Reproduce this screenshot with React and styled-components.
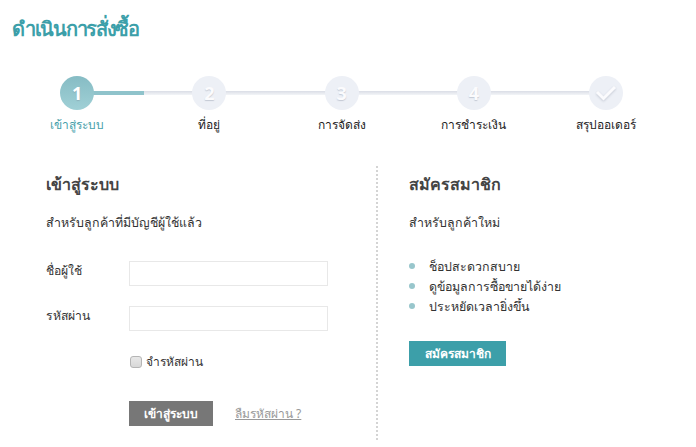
import React from "react";
import styled, { createGlobalStyle } from "styled-components";

const Global = createGlobalStyle`
  html, body { margin: 0; padding: 0; background: #fff; }
  body { font-family: Tahoma, "Noto Sans", "DejaVu Sans", sans-serif; color: #333; }
`;

const Page = styled.div`
  width: 696px;
  height: 447px;
  overflow: hidden;
`;

const Title = styled.h1`
  margin: 0;
  padding: 15px 0 0 12px;
  height: 61px;
  box-sizing: border-box;
  font-size: 20px;
  line-height: 28px;
  font-weight: 700;
  letter-spacing: -1.3px;
  color: #3c9fa9;
`;

const Stepper = styled.div`
  display: grid;
  grid-template-columns: repeat(5, 132.25px);
  padding-left: 11px;
  height: 90px;
`;

const Step = styled.div`
  display: flex;
  flex-direction: column;
  align-items: center;
  position: relative;
  padding-top: 15px;
  &::after {
    content: "";
    display: ${(p) => (p.$last ? "none" : "block")};
    position: absolute;
    top: 30px;
    left: 50%;
    width: 100%;
    height: 4px;
    background: linear-gradient(#dadde6, #f3f5f8);
  }
`;

const Progress = styled.div`
  position: absolute;
  top: 30px;
  left: 50%;
  width: 67px;
  height: 4px;
  background: #8fc3cb;
  z-index: 1;
`;

const Circle = styled.div`
  width: 34px;
  height: 34px;
  border-radius: 50%;
  display: flex;
  align-items: center;
  justify-content: center;
  position: relative;
  z-index: 2;
  background: ${(p) => (p.$active ? "linear-gradient(#86bcc4, #a0d0d6)" : "#edf0f6")};
  color: ${(p) => (p.$active ? "#fff" : "#fbfbfd")};
  font-family: "Open Sans", sans-serif;
  font-size: 18px;
  font-weight: 700;
  text-shadow: 0 1px 1px rgba(120, 130, 150, 0.35);
`;

const Check = styled.svg`
  filter: drop-shadow(0 1px 1px rgba(120, 130, 150, 0.35));
`;

const StepLabel = styled.div`
  margin-top: 7px;
  font-size: 12px;
  line-height: 16px;
  white-space: nowrap;
  color: ${(p) => (p.$active ? "#45a0aa" : "#222")};
`;

const Columns = styled.div`
  display: grid;
  grid-template-columns: 378px 1fr;
  height: 274px;
  margin-top: 15px;
`;

const LoginCol = styled.section`
  padding-left: 46px;
  border-right: 2px dotted #d4d4d4;
`;

const SignupCol = styled.section`
  padding-left: 31px;
`;

const Heading = styled.h2`
  margin: 0;
  padding-top: 7px;
  font-size: 16px;
  line-height: 22px;
  font-weight: 700;
  color: #444;
`;

const Lead = styled.p`
  margin: 19px 0 0;
  font-size: 12.4px;
  line-height: 18px;
  color: #333;
`;

const FormRow = styled.div`
  display: flex;
  align-items: flex-start;
  margin-top: ${(p) => p.$top}px;
`;

const FieldLabel = styled.label`
  width: 83px;
  font-size: 12.2px;
  line-height: 18px;
  padding-top: 1px;
`;

const Input = styled.input`
  width: 199px;
  height: 25px;
  box-sizing: border-box;
  border: 1px solid #e8e8e8;
  background: #fff;
  padding: 0 6px;
  outline: none;
`;

const RememberRow = styled.label`
  display: flex;
  align-items: center;
  gap: 4px;
  margin: 22px 0 0 84px;
  font-size: 12px;
  line-height: 18px;
`;

const Box = styled.span`
  width: 10px;
  height: 10px;
  border: 1px solid #b5b5b5;
  border-radius: 3px;
  background: linear-gradient(#e8e8e8, #d8d8d8);
`;

const Actions = styled.div`
  display: flex;
  align-items: center;
  gap: 22px;
  margin: 30px 0 0 83px;
`;

const Button = styled.button`
  height: 25px;
  width: ${(p) => p.$w}px;
  border: 0;
  padding: 0;
  font-family: inherit;
  font-size: 12px;
  font-weight: 700;
  color: #fff;
  background: ${(p) => p.$bg};
`;

const Forgot = styled.a`
  font-size: 12px;
  color: #999;
  text-decoration: underline;
`;

const Perks = styled.ul`
  list-style: none;
  margin: 24px 0 0;
  padding: 0;
`;

const Perk = styled.li`
  display: flex;
  align-items: center;
  gap: 14px;
  height: 20px;
  font-size: 12.4px;
  &::before {
    content: "";
    width: 6px;
    height: 6px;
    border-radius: 50%;
    background: #98c6cc;
  }
`;

const SignupAction = styled.div`
  margin-top: 25px;
`;

const steps = ["เข้าสู่ระบบ", "ที่อยู่", "การจัดส่ง", "การชำระเงิน", "สรุปออเดอร์"];

export default function App() {
  return (
    <Page>
      <Global />
      <Title>ดำเนินการสั่งซื้อ</Title>
      <Stepper>
        {steps.map((label, i) => (
          <Step key={label} $last={i === 4}>
            {i === 0 && <Progress />}
            <Circle $active={i === 0}>
              {i < 4 ? (
                i + 1
              ) : (
                <Check width="22" height="16" viewBox="0 0 22 16" fill="none">
                  <path d="M2 7l6.5 6.5L20 2" stroke="#fbfbfd" strokeWidth="3" />
                </Check>
              )}
            </Circle>
            <StepLabel $active={i === 0}>{label}</StepLabel>
          </Step>
        ))}
      </Stepper>
      <Columns>
        <LoginCol>
          <Heading>เข้าสู่ระบบ</Heading>
          <Lead>สำหรับลูกค้าที่มีบัญชีผู้ใช้แล้ว</Lead>
          <FormRow $top={29}>
            <FieldLabel>ชื่อผู้ใช้</FieldLabel>
            <Input />
          </FormRow>
          <FormRow $top={20}>
            <FieldLabel>รหัสผ่าน</FieldLabel>
            <Input type="password" />
          </FormRow>
          <RememberRow>
            <Box />
            จำรหัสผ่าน
          </RememberRow>
          <Actions>
            <Button $w={84} $bg="#777">เข้าสู่ระบบ</Button>
            <Forgot>ลืมรหัสผ่าน ?</Forgot>
          </Actions>
        </LoginCol>
        <SignupCol>
          <Heading>สมัครสมาชิก</Heading>
          <Lead>สำหรับลูกค้าใหม่</Lead>
          <Perks>
            <Perk>ช็อปสะดวกสบาย</Perk>
            <Perk>ดูข้อมูลการซื้อขายได้ง่าย</Perk>
            <Perk>ประหยัดเวลายิ่งขึ้น</Perk>
          </Perks>
          <SignupAction>
            <Button $w={97} $bg="#3c9fa9">สมัครสมาชิก</Button>
          </SignupAction>
        </SignupCol>
      </Columns>
    </Page>
  );
}
